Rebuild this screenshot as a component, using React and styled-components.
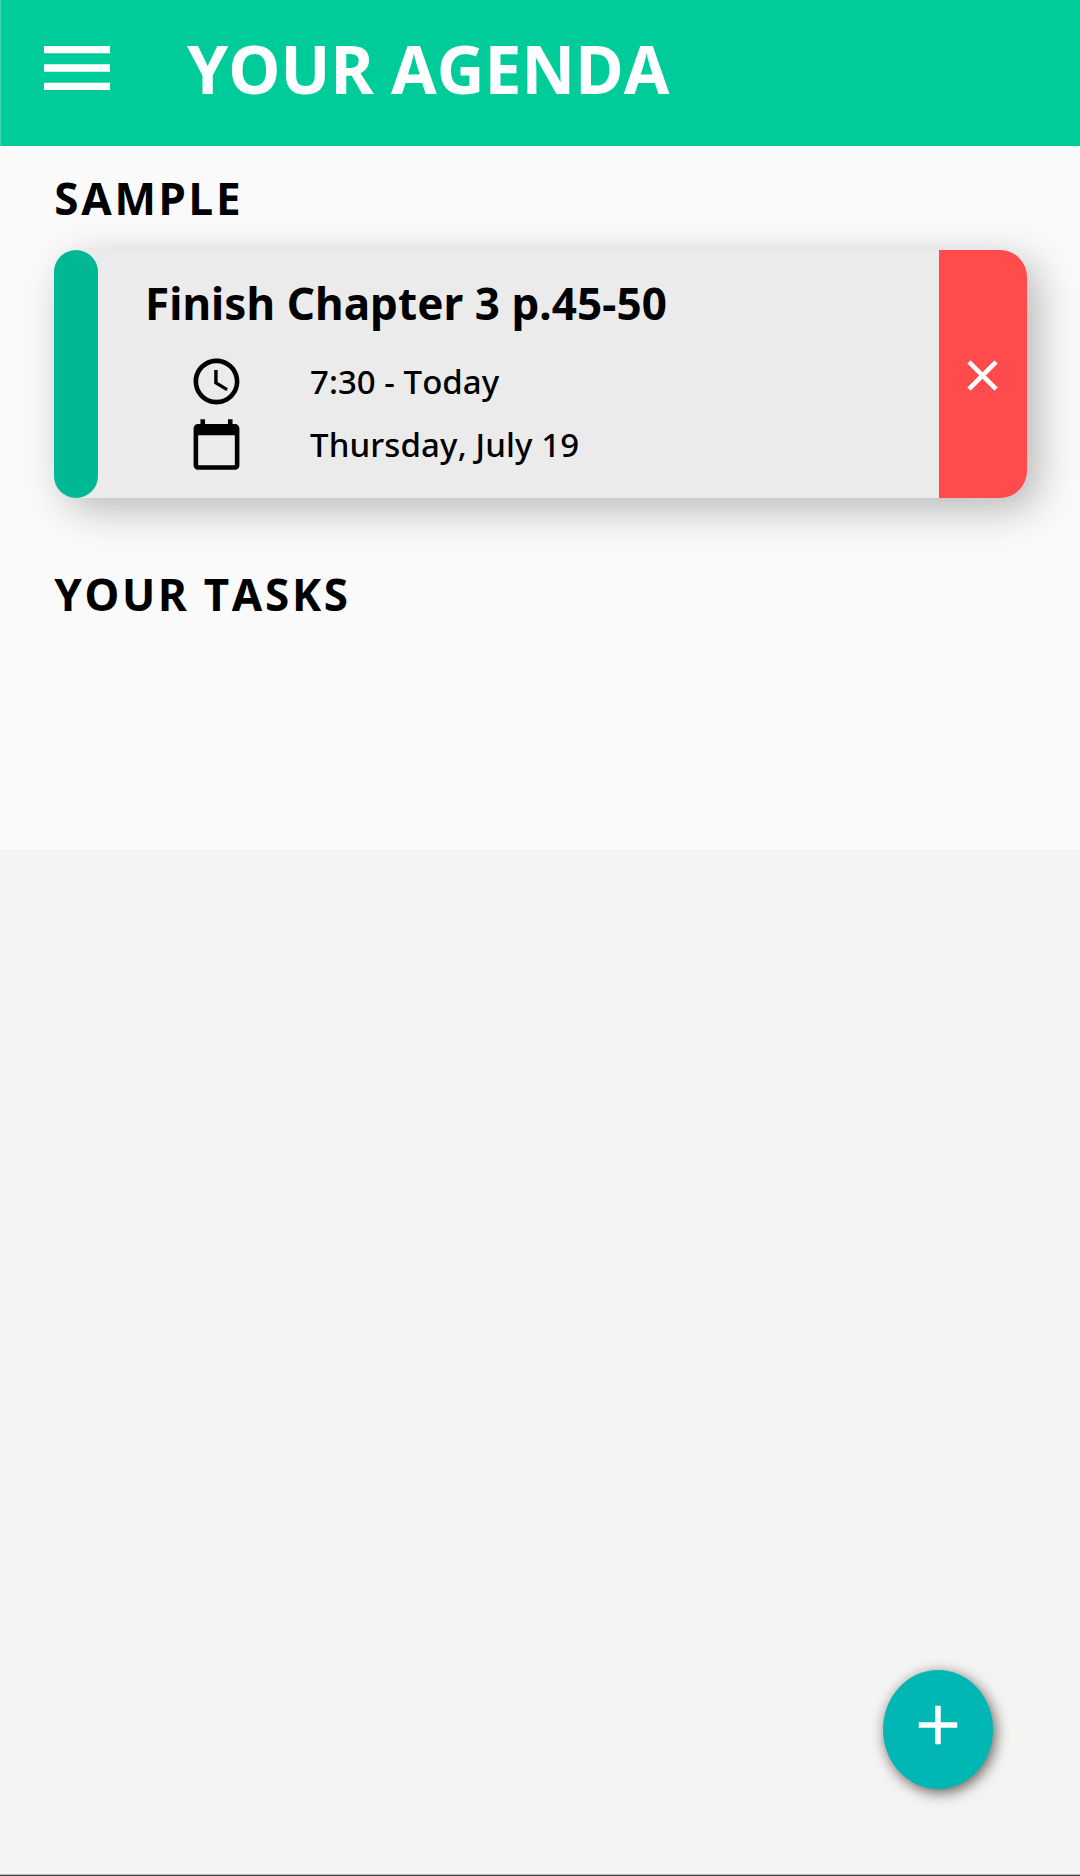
import React from 'react';
import styled, { createGlobalStyle } from 'styled-components';
import { MdMenu, MdAccessTime, MdCalendarToday, MdClose, MdAdd } from 'react-icons/md';

const GlobalStyle = createGlobalStyle`
  * { box-sizing: border-box; }
  body {
    margin: 0;
    background: #f4f4f3;
    color: #000;
    font-family: "Noto Sans", "Open Sans", sans-serif;
    font-kerning: none;
  }
  button { border: 0; padding: 0; font: inherit; color: #fff; }
  svg { display: block; }
`;

const Screen = styled.div`
  display: flex;
  flex-direction: column;
  height: 1876px;
  border-bottom: 1px solid #474747;
  box-shadow: inset 0 -1px 0 #b8b8b8;
`;

const Header = styled.header`
  display: flex;
  align-items: flex-start;
  gap: 66px;
  height: 146px;
  padding: 23px 33px 0;
  background: #00cc99;
  border-left: 1px solid #3fd8b1;
  color: #fff;
`;

const MenuButton = styled.button`
  width: 88px;
  height: 88px;
  margin: 1px 0 0 -1px;
  background: none;
`;

const PageTitle = styled.h1`
  margin: 0;
  font-size: 66px;
  font-weight: 700;
  line-height: 90px;
  letter-spacing: 0.04px;
`;

const Content = styled.main`
  height: 704px;
  padding: 22px 53px 0 54px;
  background: #fafafa;
`;

const SectionTitle = styled.h2`
  margin: 0;
  padding-left: 0.3px;
  font-size: 44px;
  font-weight: 700;
  line-height: 60px;
  letter-spacing: 2.7px;
`;

const Card = styled.article`
  display: flex;
  height: 248px;
  margin: 22px 0 66px;
  border-radius: 27px;
  background: #ebebeb;
  box-shadow: 11px 11px 40px rgba(0, 0, 0, 0.27);
`;

const Stripe = styled.div`
  width: 44px;
  border-radius: 22px;
  background: #00b894;
`;

const CardBody = styled.div`
  flex: 1;
  padding: 23px 0 0 47px;
`;

const TaskTitle = styled.h3`
  margin: 0 0 17px;
  font-size: 44px;
  font-weight: 700;
  line-height: 60px;
  letter-spacing: 0.07px;
`;

const Detail = styled.div`
  display: flex;
  align-items: center;
  gap: 66px;
  height: 63px;
  padding-left: 44px;
  font-size: 33px;
  font-weight: 500;
  letter-spacing: ${({ $tracking }) => $tracking};
`;

const RemoveButton = styled.button`
  display: flex;
  justify-content: center;
  width: 88px;
  padding: 100px 1px 0 0;
  border-radius: 0 27px 27px 0;
  background: #ff4b4b;

  path:last-child {
    stroke: currentColor;
    stroke-width: 0.25px;
  }
`;

const AddButton = styled.button`
  display: flex;
  justify-content: center;
  width: 110px;
  height: 119px;
  margin: auto 87px 86px auto;
  padding-top: 22px;
  border-radius: 50%;
  background: #00b7b3;
  box-shadow: 2.5px 3.5px 14px rgba(20, 10, 5, 0.64);
`;

export default function App() {
  return (
    <>
      <GlobalStyle />
      <Screen>
        <Header>
          <MenuButton aria-label="Menu"><MdMenu size={88} /></MenuButton>
          <PageTitle>YOUR AGENDA</PageTitle>
        </Header>
        <Content>
          <SectionTitle>SAMPLE</SectionTitle>
          <Card>
            <Stripe />
            <CardBody>
              <TaskTitle>Finish Chapter 3 p.45-50</TaskTitle>
              <Detail $tracking="0.03px"><MdAccessTime size={55} />7:30 - Today</Detail>
              <Detail $tracking="0.12px"><MdCalendarToday size={55} />Thursday, July 19</Detail>
            </CardBody>
            <RemoveButton aria-label="Remove"><MdClose size={51} /></RemoveButton>
          </Card>
          <SectionTitle>YOUR TASKS</SectionTitle>
        </Content>
        <AddButton aria-label="Add task"><MdAdd size={66} /></AddButton>
      </Screen>
    </>
  );
}
